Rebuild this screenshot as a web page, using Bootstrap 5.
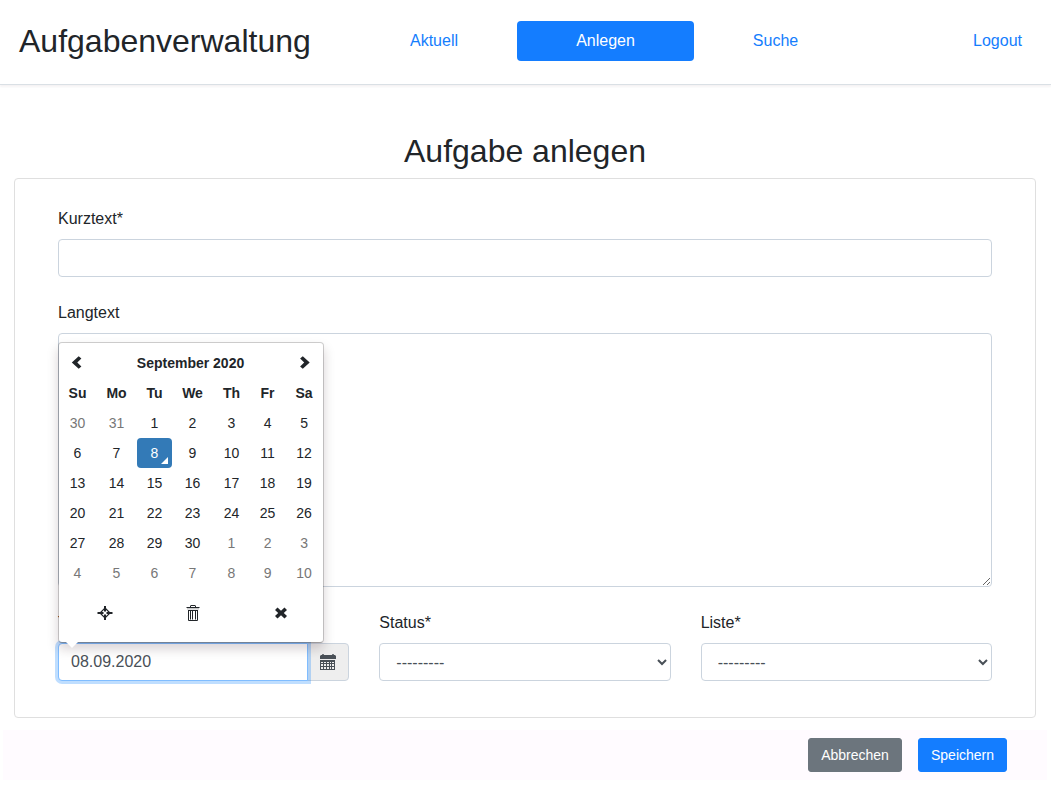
<!DOCTYPE html>
<html lang="de">
<head>
<meta charset="utf-8">
<meta name="viewport" content="width=device-width, initial-scale=1">
<title>Aufgabenverwaltung</title>
<link href="https://cdn.jsdelivr.net/npm/bootstrap@5.3.0/dist/css/bootstrap.min.css" rel="stylesheet">
<style>
  body { font-family: "Liberation Sans", Arial, sans-serif; color: #212529; background: #fff; overflow: hidden; }
  h1, h2 { font-size: 32px; line-height: 38.4px; font-weight: 400; margin: 0; }
  svg { fill: currentColor; display: block; }
  .topbar { height: 85px; padding: 0 13px 2px 19px; border-bottom: 1px solid #dae0e5; box-shadow: 0 2px 2px rgba(60,20,40,.05); }
  .topbar h1 { width: 332px; }
  .main-pills { width: 506px; display: grid; grid-template-columns: 166px 177px 163px; }
  .topbar .nav-link { padding: 8px 16px; text-align: center; color: #147dfd; line-height: 24px; border-radius: 4px; }
  .topbar .nav-link.active { background: #147dff; color: #fff; }
  .page-title { margin-top: 47px; margin-bottom: 8px; padding-right: 1px; height: 38px; }
  .task-card { margin: 0 15px 0 14px; border: 1px solid #dfdfdf; border-radius: 4px; height: 540px; padding: 28px 43px 0; }
  .form-label { margin-bottom: 8px; line-height: 24px; display: block; }
  .field { margin-bottom: 24px; }
  .form-control { border-color: #cbd4de; border-radius: 4px; padding: 6px 12px; line-height: 24px; color: #495057; box-shadow: none; }
  input.form-control, select.form-control { height: 38px; }
  textarea.form-control { height: 254px; resize: vertical; }
  select.form-control { appearance: auto; -webkit-appearance: auto; }
  .three-up { display: grid; grid-template-columns: repeat(3, minmax(0, 1fr)); column-gap: 30px; }
  .date-input.form-control { border-color: #80bdff; box-shadow: 0 0 0 3px rgba(0,123,255,.25); position: relative; z-index: 3; }
  .input-group-text { width: 42px; padding: 0 0 0 12px; background: #eee; border-color: #cbd4de; border-radius: 4px; color: #495057; }
  .picker { position: absolute; left: 0; bottom: 38px; width: 266px; height: 301px; z-index: 10; background: #fff; background-clip: padding-box; border: 1px solid rgba(0,0,0,.18); border-bottom-color: rgba(0,0,0,.3); border-radius: 4px; box-shadow: 0 6px 12px rgba(40,0,15,.175); padding-top: 5px; font-size: 14px; }
  .picker::after { content: ""; position: absolute; left: 7px; bottom: -6px; border: 6px solid transparent; border-bottom: 0; border-top-color: #fff; }
  .picker table { width: 264px; table-layout: fixed; border-collapse: separate; border-spacing: 0; text-align: center; }
  .picker td, .picker th { height: 30px; padding: 0; line-height: 30px; border-radius: 4px; }
  .picker svg { margin: 0 auto; }
  .other { color: #777; }
  .chosen { background: #337ab7; color: #fff; position: relative; }
  .chosen::after { content: ""; position: absolute; right: 4px; bottom: 4px; border: solid transparent; border-width: 0 0 7px 7px; border-bottom-color: #fff; }
  .tools { display: grid; grid-template-columns: repeat(3, 88px); margin-top: 17px; padding-left: 2px; }
  .actions { margin: 12px 4px 0 3px; height: 50px; background: #fffbff; padding: 8px 40px 0 0; gap: 16px; }
  .actions .btn { font-size: 14px; line-height: 21px; height: 34px; border-radius: 3px; padding: 5.5px 12px; }
  .actions .btn-secondary { background: #6c757d; width: 94px; border-color: #6c757d; }
  .actions .btn-primary { background: #147dff; width: 89px; border-color: #147dff; }
</style>
</head>
<body>
<header class="topbar d-flex align-items-center">
  <h1>Aufgabenverwaltung</h1>
  <nav class="nav nav-pills main-pills">
    <a class="nav-link" href="#">Aktuell</a>
    <a class="nav-link active" href="#">Anlegen</a>
    <a class="nav-link" href="#">Suche</a>
  </nav>
  <a class="nav-link ms-auto" href="#">Logout</a>
</header>

<main>
  <h2 class="page-title text-center">Aufgabe anlegen</h2>
  <form class="task-card">
    <div class="field">
      <label class="form-label" for="kurz">Kurztext*</label>
      <input class="form-control" id="kurz" type="text">
    </div>
    <div class="field">
      <label class="form-label" for="lang">Langtext</label>
      <textarea class="form-control" id="lang"></textarea>
    </div>
    <div class="three-up">
      <div>
        <label class="form-label" for="termin">Termin*</label>
        <div class="position-relative">
          <div class="input-group flex-nowrap">
            <input class="form-control date-input" id="termin" type="text" value="08.09.2020">
            <span class="input-group-text">
              <svg width="16" height="16" viewBox="0 0 16 16"><path d="M2 1q0-1 1-1t1 1h8q0-1 1-1t1 1h1l1 1v3H0V2l1-1z"/><path fill-rule="evenodd" d="M0 6h15v10H0zM1 8v1h2V8zM4 8v1h2V8zM7 8v1h2V8zM10 8v1h1V8zM12 8v1h2V8zM1 10v2h2v-2zM4 10v2h2v-2zM7 10v2h2v-2zM10 10v2h1v-2zM12 10v2h2v-2zM1 13v2h2v-2zM4 13v2h2v-2zM7 13v2h2v-2zM10 13v2h1v-2zM12 13v2h2v-2z"/></svg>
            </span>
          </div>
          <div class="picker">
            <table>
              <colgroup><col width="37"><col width="41"><col width="35"><col width="41"><col width="37"><col width="35"><col width="38"></colgroup>
              <thead>
                <tr>
                  <th><svg width="14" height="14" viewBox="0 0 14 14"><path d="M7.700 .2 10.400 2.500 6.300 6.500l4.100 4-2.700 2.300L.8 6.500z"/></svg></th>
                  <th colspan="5">September 2020</th>
                  <th><svg width="14" height="14" viewBox="0 0 14 14"><path d="M5.800 .2 3.100 2.500 7.200 6.500l-4.100 4 2.700 2.300L12.700 6.500z"/></svg></th>
                </tr>
                <tr><th>Su</th><th>Mo</th><th>Tu</th><th>We</th><th>Th</th><th>Fr</th><th>Sa</th></tr>
              </thead>
              <tbody>
                <tr><td class="other">30</td><td class="other">31</td><td>1</td><td>2</td><td>3</td><td>4</td><td>5</td></tr>
                <tr><td>6</td><td>7</td><td class="chosen">8</td><td>9</td><td>10</td><td>11</td><td>12</td></tr>
                <tr><td>13</td><td>14</td><td>15</td><td>16</td><td>17</td><td>18</td><td>19</td></tr>
                <tr><td>20</td><td>21</td><td>22</td><td>23</td><td>24</td><td>25</td><td>26</td></tr>
                <tr><td>27</td><td>28</td><td>29</td><td>30</td><td class="other">1</td><td class="other">2</td><td class="other">3</td></tr>
                <tr><td class="other">4</td><td class="other">5</td><td class="other">6</td><td class="other">7</td><td class="other">8</td><td class="other">9</td><td class="other">10</td></tr>
              </tbody>
            </table>
            <div class="tools">
              <svg width="16" height="16" viewBox="0 0 16 16"><path d="M7 1h2v5.500H7zM7 9.500h2V15H7zM.5 7h6v2h-6zM9.500 7h6v2h-6z"/><path d="M8 3 13 8 8 13 3 8z" fill="none" stroke="currentColor" stroke-width="1.200"/></svg>
              <svg width="16" height="17" viewBox="0 0 16 17"><path d="M5 2V1l1-1h4l1 1v1h3l1 1H1l1-1zM6 2h4V1H6z" fill-rule="evenodd"/><path d="M2 3h12v1.500H2z" opacity=".25"/><path d="M3.500 5.500v10h9v-10M5.500 5.500v9M7.500 5.500v9M10.500 5.500v9M3 5.500h10" fill="none" stroke="currentColor" stroke-width="1"/></svg>
              <svg width="14" height="16" viewBox="0 0 14 16"><path d="M3.500 2.500 7 5.800l3.500-3.300 2.500 2.400L9.800 8l3.200 3.100-2.500 2.400L7 10.200l-3.500 3.300L1 11.100 4.200 8 1 4.900z"/></svg>
            </div>
          </div>
        </div>
      </div>
      <div>
        <label class="form-label" for="status">Status*</label>
        <select class="form-control" id="status"><option>---------</option></select>
      </div>
      <div>
        <label class="form-label" for="liste">Liste*</label>
        <select class="form-control" id="liste"><option>---------</option></select>
      </div>
    </div>
  </form>
  <div class="actions d-flex justify-content-end">
    <button class="btn btn-secondary" type="button">Abbrechen</button>
    <button class="btn btn-primary" type="button">Speichern</button>
  </div>
</main>
<script src="https://cdn.jsdelivr.net/npm/bootstrap@5.3.0/dist/js/bootstrap.bundle.min.js"></script>
</body>
</html>
